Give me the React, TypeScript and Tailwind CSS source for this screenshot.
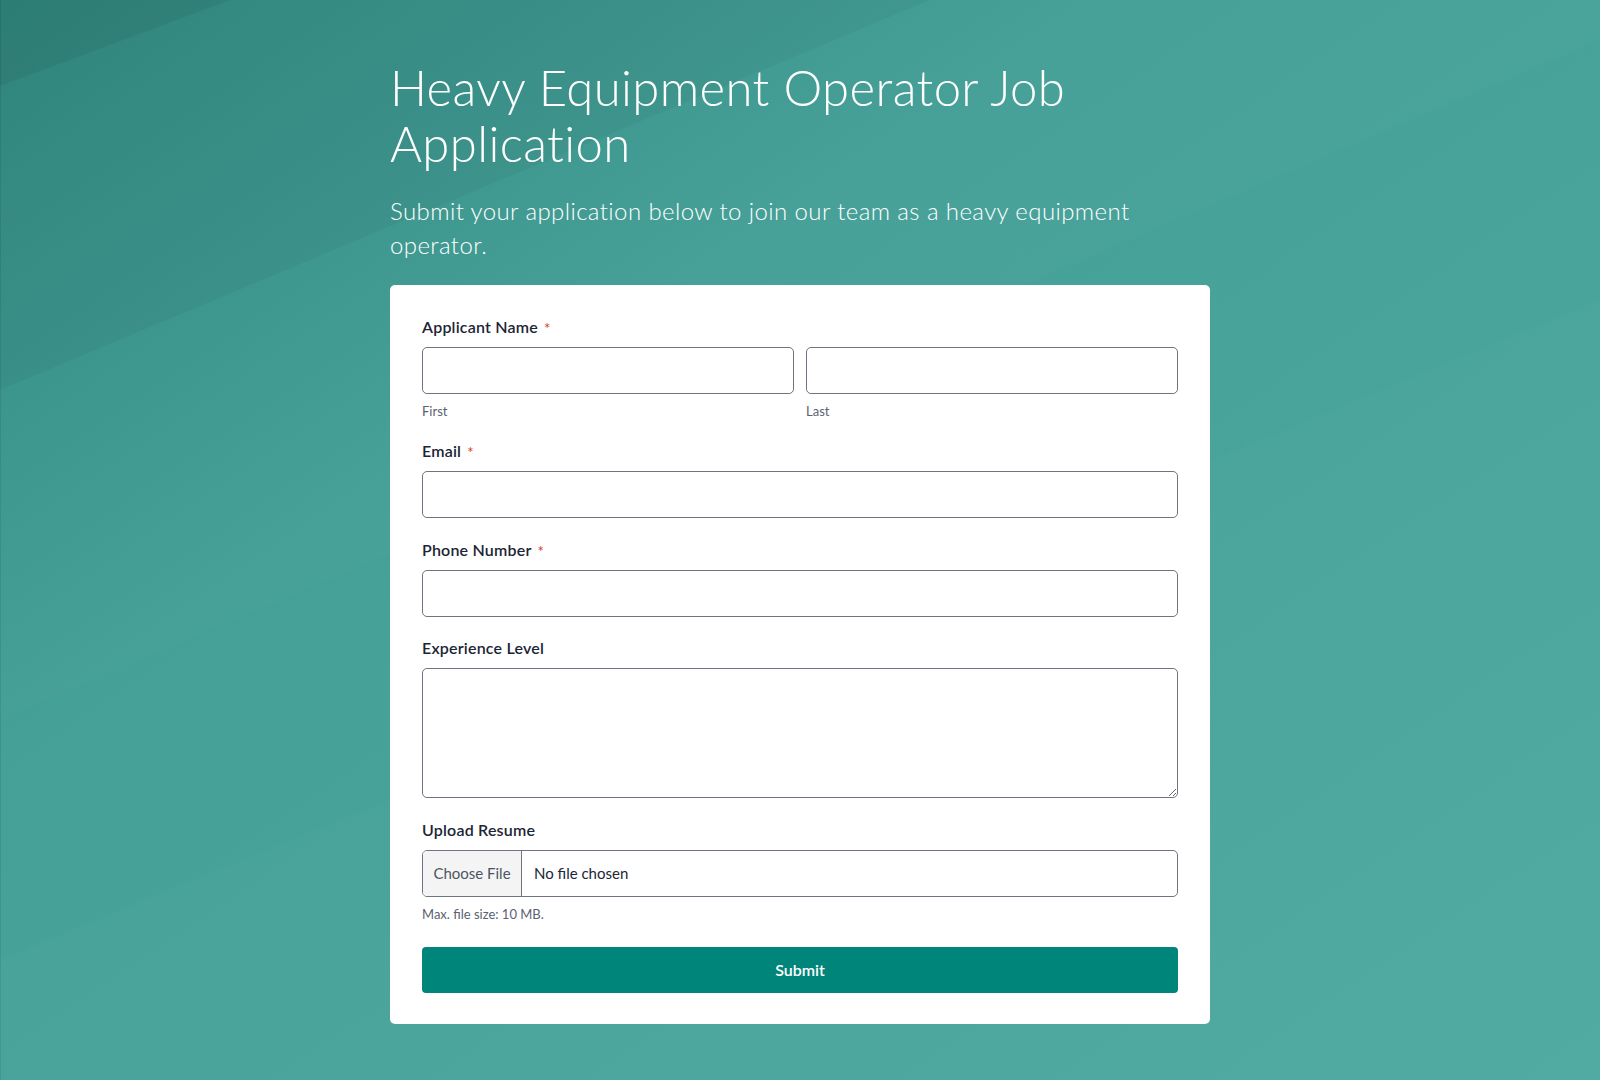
import React from "react";

function Background() {
  return (
    <svg
      className="absolute inset-0 h-full w-full"
      viewBox="0 0 1600 1080"
      preserveAspectRatio="none"
      aria-hidden="true"
    >
      <defs>
        <linearGradient id="bg" x1="0" y1="0" x2="1" y2="1">
          <stop offset="0" stopColor="#2f887e" />
          <stop offset="0.35" stopColor="#45a098" />
          <stop offset="1" stopColor="#4eaaa1" />
        </linearGradient>
      </defs>
      <rect width="1600" height="1080" fill="url(#bg)" />
      <polygon points="0,0 230,0 0,86" fill="#000000" fillOpacity="0.05" />
      <polygon points="0,0 930,0 0,390" fill="#000000" fillOpacity="0.035" />
      <polygon points="0,0 1600,0 1600,40 0,720" fill="#ffffff" fillOpacity="0.012" />
      <polygon points="0,1080 0,960 1600,300 1600,1080" fill="#ffffff" fillOpacity="0.018" />
      <rect x="0" y="0" width="1" height="1080" fill="#000000" fillOpacity="0.08" />
    </svg>
  );
}

function Label({ children, required }: { children: React.ReactNode; required?: boolean }) {
  return (
    <div className="mb-[10px] flex items-center text-[16px] leading-[20px] font-semibold tracking-[0.2px] text-[#1c2535]">
      <span>{children}</span>
      {required && (
        <span className="ml-[6px] mt-[2px] text-[15px] leading-[15px] font-normal text-[#d93a26]">*</span>
      )}
    </div>
  );
}

const inputCls =
  "block h-[47px] w-full rounded-[5px] border border-[#6f7480] bg-white px-3 text-[15px] text-[#1c2535] outline-none";

export default function App() {
  return (
    <div
      className="relative min-h-screen w-full overflow-hidden"
      style={{ fontFamily: "Lato, 'Noto Sans', sans-serif" }}
    >
      <Background />
      <div className="relative mx-auto w-[820px] pt-[59px] pb-[56px]">
        <h1 className="text-[49px] leading-[56px] font-light tracking-[0.4px] text-white">
          Heavy Equipment Operator Job Application
        </h1>
        <p className="mt-[23px] text-[24px] leading-[34px] font-light tracking-[0.4px] text-white">
          Submit your application below to join our team as a heavy equipment operator.
        </p>

        <form className="mt-[23px] rounded-[5px] bg-white px-8 pt-[32px] pb-[31px]">
          <div>
            <Label required>Applicant Name</Label>
            <div className="grid grid-cols-2 gap-3">
              <div>
                <input className={inputCls} />
                <div className="mt-[8px] text-[13px] leading-[18px] text-[#5b6270]">First</div>
              </div>
              <div>
                <input className={inputCls} />
                <div className="mt-[8px] text-[13px] leading-[18px] text-[#5b6270]">Last</div>
              </div>
            </div>
          </div>

          <div className="mt-[21px]">
            <Label required>Email</Label>
            <input type="email" className={inputCls} />
          </div>

          <div className="mt-[22px]">
            <Label required>Phone Number</Label>
            <input type="tel" className={inputCls} />
          </div>

          <div className="mt-[21px]">
            <Label>Experience Level</Label>
            <textarea className="block h-[130px] w-full resize-y rounded-[5px] border border-[#6f7480] bg-white px-3 py-2 text-[15px] text-[#1c2535] outline-none" />
          </div>

          <div className="mt-[22px]">
            <Label>Upload Resume</Label>
            <div className="flex h-[47px] w-full overflow-hidden rounded-[5px] border border-[#6f7480] bg-white">
              <div className="flex w-[99px] items-center justify-center border-r border-[#6f7480] bg-[#f4f4f5] text-[15px] text-[#4d5461]">
                Choose File
              </div>
              <div className="flex items-center pl-[12px] text-[15px] text-[#1c2535]">No file chosen</div>
            </div>
            <div className="mt-[8px] text-[13px] leading-[18px] text-[#5b6270]">Max. file size: 10 MB.</div>
          </div>

          <button
            type="button"
            className="mt-[24px] flex h-[46px] w-full items-center justify-center rounded-[4px] bg-[#00857a] text-[16px] font-semibold text-white"
          >
            Submit
          </button>
        </form>
      </div>
    </div>
  );
}
